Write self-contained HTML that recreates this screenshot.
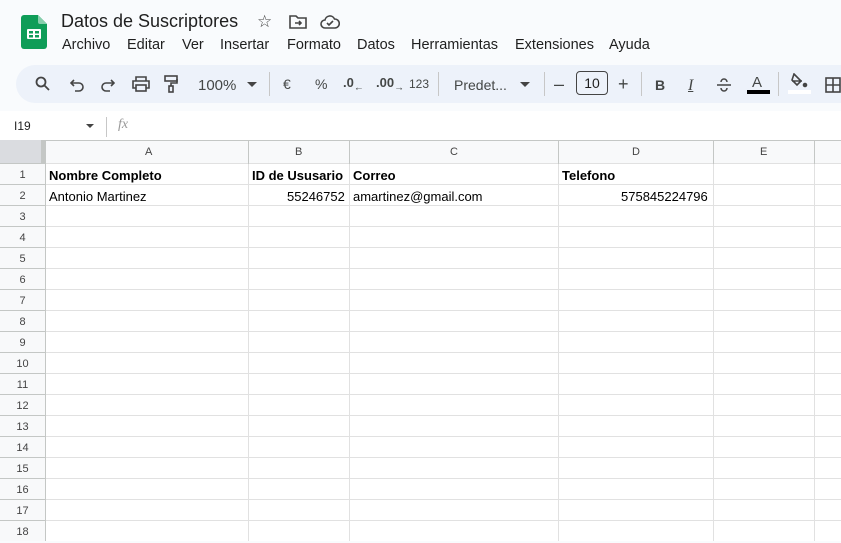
<!DOCTYPE html>
<html><head><meta charset="utf-8"><style>
body{margin:0;width:841px;height:541px;overflow:hidden;background:#f9fbfd;font-family:"Liberation Sans",Arial,sans-serif;position:relative}
.a{position:absolute}
.menu span{position:absolute;top:0}
.tb{color:#444746;font-size:14px}
.t{position:absolute;font-size:13px;color:#000;top:0}
</style></head><body>
<!-- logo -->
<svg class="a" style="left:21px;top:15px" width="26" height="34" viewBox="0 0 26 34"><path d="M3 0h14l9 9v22a3 3 0 0 1-3 3H3a3 3 0 0 1-3-3V3a3 3 0 0 1 3-3z" fill="#0f9d58"/><path d="M17 0l9 9h-7a2 2 0 0 1-2-2z" fill="#87ceac"/><rect x="6" y="14" width="14" height="10" rx="1" fill="#fff"/><rect x="8" y="16" width="4" height="2.5" fill="#0f9d58"/><rect x="14" y="16" width="4" height="2.5" fill="#0f9d58"/><rect x="8" y="20" width="4" height="2.5" fill="#0f9d58"/><rect x="14" y="20" width="4" height="2.5" fill="#0f9d58"/></svg>
<div class="a" style="left:61px;top:11px;font-size:18px;color:#1f1f1f">Datos de Suscriptores</div>
<div class="a" style="left:257px;top:12px;font-size:17px;color:#444">☆</div>
<svg class="a" style="left:289px;top:15px" width="18" height="14" viewBox="0 0 18 14" fill="none" stroke="#444" stroke-width="1.6"><path d="M1 1h6l2 2h8v10H1z"/><path d="M6 8h6M10 6l2 2-2 2"/></svg>
<svg class="a" style="left:320px;top:15px" width="20" height="14" viewBox="0 0 20 14" fill="none" stroke="#444" stroke-width="1.6"><path d="M5 13a4 4 0 0 1 0-8 5 5 0 0 1 9.5-1A4.5 4.5 0 0 1 15 13z"/><path d="M7 8l2 2 4-4"/></svg>
<div class="a menu" style="left:0;top:37px;width:700px;font-size:14.5px;color:#1f1f1f;white-space:nowrap"><span style="left:62px">Archivo</span><span style="left:127px">Editar</span><span style="left:182px">Ver</span><span style="left:220px">Insertar</span><span style="left:287px">Formato</span><span style="left:357px">Datos</span><span style="left:411px">Herramientas</span><span style="left:515px">Extensiones</span><span style="left:609px">Ayuda</span></div>
<!-- toolbar -->
<div class="a" style="left:16px;top:65px;width:850px;height:38px;border-radius:19px;background:#edf2fa"></div>
<div class="a tb" style="left:0;top:75px;width:841px;height:20px">
<svg class="a" style="left:35px;top:1px" width="16" height="16" viewBox="0 0 16 16" fill="none" stroke="#444" stroke-width="1.8"><circle cx="6" cy="6" r="4.5"/><path d="M9.5 9.5L14 14"/></svg>
<svg class="a" style="left:70px;top:3px" width="14" height="14" viewBox="0 0 14 14" fill="none" stroke="#444" stroke-width="1.6"><path d="M4 2L1 5l3 3"/><path d="M1 5h8a4 4 0 0 1 0 8H5"/></svg>
<svg class="a" style="left:101px;top:3px" width="14" height="14" viewBox="0 0 14 14" fill="none" stroke="#444" stroke-width="1.6"><path d="M10 2l3 3-3 3"/><path d="M13 5H5a4 4 0 0 0 0 8h4"/></svg>
<svg class="a" style="left:132px;top:1px" width="18" height="16" viewBox="0 0 18 16" fill="none" stroke="#444" stroke-width="1.6"><path d="M4 5V1h10v4M4 12H1V5h16v7h-3"/><rect x="4" y="9" width="10" height="6"/></svg>
<svg class="a" style="left:164px;top:0" width="14" height="18" viewBox="0 0 14 18" fill="none" stroke="#444" stroke-width="1.6"><rect x="1" y="1" width="12" height="5"/><path d="M13 4v4H7v3"/><rect x="5" y="11" width="4" height="6"/></svg>
<span class="a" style="left:198px;top:2px;font-size:15px">100%</span>
<svg class="a" style="left:247px;top:7px" width="10" height="5"><path d="M0 0h10L5 5z" fill="#444"/></svg>
<div class="a" style="left:269px;top:-3px;width:1px;height:24px;background:#c7c7c7"></div>
<span class="a" style="left:283px;top:1px">€</span>
<span class="a" style="left:315px;top:1px">%</span>
<span class="a" style="left:343px;top:0;font-size:13px;font-weight:bold">.0<sub style="font-size:10px">←</sub></span>
<span class="a" style="left:376px;top:0;font-size:13px;font-weight:bold">.00<sub style="font-size:10px">→</sub></span>
<span class="a" style="left:409px;top:2px;font-size:12px">123</span>
<div class="a" style="left:438px;top:-3px;width:1px;height:24px;background:#c7c7c7"></div>
<span class="a" style="left:454px;top:2px;font-size:14px">Predet...</span>
<svg class="a" style="left:520px;top:7px" width="10" height="5"><path d="M0 0h10L5 5z" fill="#444"/></svg>
<div class="a" style="left:544px;top:-3px;width:1px;height:24px;background:#c7c7c7"></div>
<span class="a" style="left:554px;top:-1px;font-size:18px">–</span>
<div class="a" style="left:576px;top:-4px;width:32px;height:24px;border:1px solid #444;border-radius:4px;box-sizing:border-box;text-align:center;line-height:22px;font-size:14px;color:#1f1f1f">10</div>
<span class="a" style="left:618px;top:-1px;font-size:18px">+</span>
<div class="a" style="left:641px;top:-3px;width:1px;height:24px;background:#c7c7c7"></div>
<span class="a" style="left:655px;top:2px;font-weight:bold">B</span>
<span class="a" style="left:688px;top:2px;font-style:italic;font-family:'Liberation Serif',serif;font-size:16px;text-decoration:underline">I</span>
<svg class="a" style="left:716px;top:2px" width="16" height="16" viewBox="0 0 16 16" fill="none" stroke="#444" stroke-width="1.5"><path d="M1 8h14M5 5a3 3 0 0 1 6 0M5 11a3 3 0 0 0 6 0"/></svg>
<span class="a" style="left:752px;top:-1px;font-size:15px">A</span>
<div class="a" style="left:747px;top:15px;width:23px;height:4px;background:#000"></div>
<div class="a" style="left:778px;top:-3px;width:1px;height:24px;background:#c7c7c7"></div>
<svg class="a" style="left:790px;top:-2px" width="18" height="16" viewBox="0 0 18 16" fill="none" stroke="#444" stroke-width="1.6"><path d="M4 1l7 7-4 4-5-5zM2 8h10"/><circle cx="15" cy="12" r="1.5" fill="#444"/></svg>
<div class="a" style="left:788px;top:15px;width:23px;height:4px;background:#fff"></div>
<svg class="a" style="left:825px;top:2px" width="16" height="16" viewBox="0 0 16 16" fill="none" stroke="#444" stroke-width="1.6"><rect x="1" y="1" width="14" height="14"/><path d="M8 1v14M1 8h14"/></svg>
</div>
<!-- formula bar -->
<div class="a" style="left:0;top:111px;width:841px;height:30px;background:#fff"></div>
<div class="a" style="left:14px;top:119px;font-size:12px;color:#1f1f1f">I19</div>
<svg class="a" style="left:86px;top:124px" width="8" height="4"><path d="M0 0h8L4 4z" fill="#444"/></svg>
<div class="a" style="left:106px;top:117px;width:1px;height:20px;background:#c7c7c7"></div>
<div class="a" style="left:118px;top:117px;font-size:14px;font-style:italic;color:#999;font-family:'Liberation Serif',serif">fx</div>
<!-- grid -->
<div class="a" style="left:0;top:140px;width:841px;height:401px;background:#fff"></div>
<div class="a" style="left:0;top:140px;width:841px;height:24px;background:#f8f9fa;border-top:1px solid #c4c7c5;border-bottom:1px solid #c4c7c5;box-sizing:border-box"></div>
<div class="a" style="left:0;top:164px;width:45px;height:377px;background:#f8f9fa"></div>
<div class="a" style="left:0;top:140px;width:45px;height:24px;background:#dadce0;border-right:4px solid #c4c7c5;box-sizing:border-box"></div>
<div class="a" style="left:45px;top:163px;width:796px;height:378px;background:repeating-linear-gradient(to bottom,#e1e1e1 0 1px,transparent 1px 21px)"></div>
<div class="a" style="left:0;top:163px;width:45px;height:378px;background:repeating-linear-gradient(to bottom,#c4c7c5 0 1px,transparent 1px 21px)"></div>
<div class="a" style="left:45px;top:140px;width:1px;height:401px;background:#c4c7c5"></div>
<div class="a" style="left:248px;top:140px;width:1px;height:24px;background:#c4c7c5"></div>
<div class="a" style="left:349px;top:140px;width:1px;height:24px;background:#c4c7c5"></div>
<div class="a" style="left:558px;top:140px;width:1px;height:24px;background:#c4c7c5"></div>
<div class="a" style="left:713px;top:140px;width:1px;height:24px;background:#c4c7c5"></div>
<div class="a" style="left:814px;top:140px;width:1px;height:24px;background:#c4c7c5"></div>
<div class="a" style="left:248px;top:164px;width:1px;height:377px;background:#e1e1e1"></div>
<div class="a" style="left:349px;top:164px;width:1px;height:377px;background:#e1e1e1"></div>
<div class="a" style="left:558px;top:164px;width:1px;height:377px;background:#e1e1e1"></div>
<div class="a" style="left:713px;top:164px;width:1px;height:377px;background:#e1e1e1"></div>
<div class="a" style="left:814px;top:164px;width:1px;height:377px;background:#e1e1e1"></div>
<div class="a" style="top:146px;left:0;width:841px;font-size:11px;color:#444">
<span class="a" style="left:145px">A</span><span class="a" style="left:295px">B</span><span class="a" style="left:450px">C</span><span class="a" style="left:632px">D</span><span class="a" style="left:760px">E</span></div>
<div class="a" style="left:0;top:165px;width:45px;font-size:11px;color:#444;text-align:center;line-height:21px">
<div>1</div><div>2</div><div>3</div><div>4</div><div>5</div><div>6</div><div>7</div><div>8</div><div>9</div><div>10</div><div>11</div><div>12</div><div>13</div><div>14</div><div>15</div><div>16</div><div>17</div><div>18</div></div>
<div class="a" style="left:0;top:168px;width:841px;height:16px;font-weight:bold">
<span class="t" style="left:49px">Nombre Completo</span><span class="t" style="left:252px">ID de Ususario</span><span class="t" style="left:353px">Correo</span><span class="t" style="left:562px">Telefono</span></div>
<div class="a" style="left:0;top:189px;width:841px;height:16px">
<span class="t" style="left:49px">Antonio Martinez</span><span class="t" style="left:287px">55246752</span><span class="t" style="left:353px">amartinez@gmail.com</span><span class="t" style="left:621px">575845224796</span></div>
</body></html>
